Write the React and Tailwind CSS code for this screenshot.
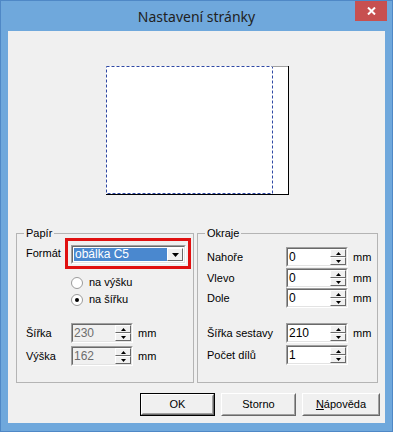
import React from 'react'

const sunkenOuter = 'border border-t-[#a0a0a0] border-l-[#a0a0a0] border-b-white border-r-white'
const sunkenInner = 'border border-t-[#696969] border-l-[#696969] border-b-[#e3e3e3] border-r-[#e3e3e3]'

function Arrow({ up }) {
  return (
    <svg width="5" height="3" viewBox="0 0 5 3" className="block">
      <polygon points={up ? '2.5,0 5,3 0,3' : '0,0 5,0 2.5,3'} fill="#000" />
    </svg>
  )
}

function SpinBtn({ up }) {
  return (
    <div className="flex flex-1 items-center justify-center bg-[#f0f0f0] border border-t-white border-l-white border-b-[#696969] border-r-[#696969]">
      <Arrow up={up} />
    </div>
  )
}

function Spin({ value, disabled }) {
  return (
    <div className={`flex h-[20px] w-[62px] ${sunkenOuter}`}>
      <div className={`flex flex-1 ${sunkenInner} ${disabled ? 'bg-[#f0f0f0]' : 'bg-white'}`}>
        <span className={`flex-1 pl-[1px] text-[12px] leading-[16px] ${disabled ? 'text-[#6d6d6d]' : 'text-black'}`}>{value}</span>
        <div className="flex w-[16px] flex-col">
          <SpinBtn up />
          <SpinBtn />
        </div>
      </div>
    </div>
  )
}

function Radio({ checked, label }) {
  return (
    <div className="flex h-[17px] items-center gap-[6px] pl-[45px]">
      <svg width="12" height="12" viewBox="0 0 12 12">
        <circle cx="6" cy="6" r="5.5" fill="#fff" stroke="#9a9a9a" />
        {checked && <circle cx="6" cy="6" r="2" fill="#000" />}
      </svg>
      <span>{label}</span>
    </div>
  )
}

function Group({ title, className, children }) {
  return (
    <div className={`relative h-[150px] border border-[#b4b4b4] ${className}`}>
      <span className="absolute -top-[7px] left-[7px] bg-[#f0f0f0] px-[2px] leading-[13px]">{title}</span>
      {children}
    </div>
  )
}

function Button({ children, isDefault, w }) {
  return (
    <div className={`h-[23px] ${w} ${isDefault ? 'border border-black' : ''}`}>
      <div className="flex h-full items-center justify-center bg-[#f0f0f0] border border-t-white border-l-white border-b-[#696969] border-r-[#696969]">
        <div className="flex h-full w-full items-center justify-center border border-t-[#f0f0f0] border-l-[#f0f0f0] border-b-[#a0a0a0] border-r-[#a0a0a0]">
          {children}
        </div>
      </div>
    </div>
  )
}

export default function App() {
  return (
    <div className="h-[432px] w-[393px] border border-[#4f88c6] bg-[#6fa8dc] font-['Liberation_Sans',Arial,sans-serif] text-[11px] text-black">
      {/* title bar */}
      <div className="relative flex h-[30px] items-center justify-center">
        <span className="font-['Noto_Sans',sans-serif] text-[14px] text-[#222]">Nastavení stránky</span>
        <div className="absolute right-[5px] top-0 flex h-[20px] w-[32px] items-center justify-center bg-[#c75050]">
          <svg width="9" height="8" viewBox="0 0 9 8">
            <path d="M1 0.5 L8 7.5 M8 0.5 L1 7.5" stroke="#fff" strokeWidth="2" />
          </svg>
        </div>
      </div>

      {/* client area */}
      <div className="ml-[7px] flex h-[392px] w-[377px] flex-col bg-[#f0f0f0]">
        <div className="pl-[98px] pt-[35px]">
          <svg width="184" height="131" viewBox="0 0 184 131" className="block">
            <rect x="0" y="0" width="182" height="128" fill="#fff" />
            <rect x="0.5" y="0.5" width="166" height="127" fill="none" stroke="#2f48a4" strokeDasharray="3 2" />
            <line x1="166" y1="0.5" x2="182" y2="0.5" stroke="#a0a0a0" />
            <line x1="182.5" y1="0" x2="182.5" y2="129" stroke="#000" />
            <line x1="0" y1="128.5" x2="183" y2="128.5" stroke="#000" />
          </svg>
        </div>

        <div className="mt-[36px] flex gap-[3px] pl-[8px]">
          <Group title="Papír" className="w-[178px]">
            <div className="flex flex-col pl-[9px] pt-[4px]">
              <div className="flex h-[31px] items-center">
                <span className="w-[39px]">Formát</span>
                <div className="h-[31px] w-[126px] border-[3px] border-[#e01010] pl-[3px] pt-[4px]">
                  <div className={`flex h-[19px] w-[115px] ${sunkenOuter}`}>
                    <div className={`flex flex-1 bg-white p-[1px] ${sunkenInner}`}>
                      <span className="flex-1 bg-[#4a88cf] pl-[1px] text-[12px] leading-[13px] text-white">obálka C5</span>
                      <div className="flex w-[16px] items-center justify-center bg-[#f0f0f0] border border-t-white border-l-white border-b-[#696969] border-r-[#696969]">
                        <svg width="7" height="4" viewBox="0 0 7 4" className="block">
                          <polygon points="0,0 7,0 3.5,4" fill="#000" />
                        </svg>
                      </div>
                    </div>
                  </div>
                </div>
              </div>
              <div className="mt-[5px]">
                <Radio label="na výšku" />
                <Radio checked label="na šířku" />
              </div>
              <div className="mt-[15px] flex h-[20px] items-center">
                <span className="w-[45px]">Šířka</span>
                <Spin value="230" disabled />
                <span className="ml-[5px]">mm</span>
              </div>
              <div className="mt-[3px] flex h-[20px] items-center">
                <span className="w-[45px]">Výška</span>
                <Spin value="162" disabled />
                <span className="ml-[5px]">mm</span>
              </div>
            </div>
          </Group>

          <Group title="Okraje" className="w-[181px]">
            <div className="flex flex-col pl-[9px] pt-[13px]">
              <div className="flex h-[20px] items-center">
                <span className="w-[79px]">Nahoře</span>
                <Spin value="0" />
                <span className="ml-[5px]">mm</span>
              </div>
              <div className="mt-[1px] flex h-[20px] items-center">
                <span className="w-[79px]">Vlevo</span>
                <Spin value="0" />
                <span className="ml-[5px]">mm</span>
              </div>
              <div className="flex h-[20px] items-center">
                <span className="w-[79px]">Dole</span>
                <Spin value="0" />
                <span className="ml-[5px]">mm</span>
              </div>
              <div className="mt-[15px] flex h-[20px] items-center">
                <span className="w-[79px]">Šířka sestavy</span>
                <Spin value="210" />
                <span className="ml-[5px]">mm</span>
              </div>
              <div className="mt-[2px] flex h-[20px] items-center">
                <span className="w-[79px]">Počet dílů</span>
                <Spin value="1" />
              </div>
            </div>
          </Group>
        </div>

        <div className="mt-[10px] flex justify-end gap-[6px] pr-[5px]">
          <Button isDefault w="w-[75px]">OK</Button>
          <Button w="w-[75px]">Storno</Button>
          <Button w="w-[78px]"><span><span className="underline">N</span>ápověda</span></Button>
        </div>
      </div>
    </div>
  )
}
